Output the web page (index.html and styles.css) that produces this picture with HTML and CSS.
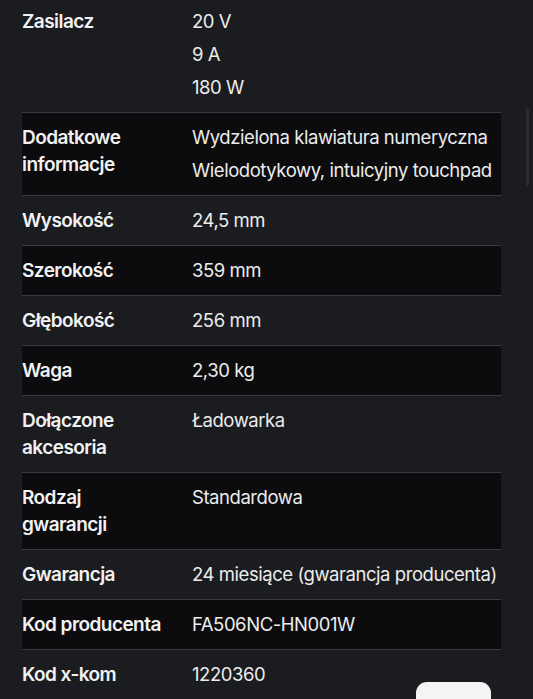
FILE: index.html
```html
<!DOCTYPE html>
<html lang="pl">
<head>
<meta charset="utf-8">
<link rel="stylesheet" href="styles.css">
</head>
<body>
<div class="page">
  <div class="specs">
    <div class="row">
      <div class="label">Zasilacz</div>
      <div class="values"><div class="v">20 V</div><div class="v">9 A</div><div class="v">180 W</div></div>
    </div>
    <div class="row dark">
      <div class="label">Dodatkowe informacje</div>
      <div class="values"><div class="v">Wydzielona klawiatura numeryczna</div><div class="v">Wielodotykowy, intuicyjny touchpad</div></div>
    </div>
    <div class="row">
      <div class="label">Wysokość</div>
      <div class="values"><div class="v">24,5 mm</div></div>
    </div>
    <div class="row dark">
      <div class="label">Szerokość</div>
      <div class="values"><div class="v">359 mm</div></div>
    </div>
    <div class="row">
      <div class="label">Głębokość</div>
      <div class="values"><div class="v">256 mm</div></div>
    </div>
    <div class="row dark">
      <div class="label">Waga</div>
      <div class="values"><div class="v">2,30 kg</div></div>
    </div>
    <div class="row">
      <div class="label">Dołączone akcesoria</div>
      <div class="values"><div class="v">Ładowarka</div></div>
    </div>
    <div class="row dark">
      <div class="label">Rodzaj gwarancji</div>
      <div class="values"><div class="v">Standardowa</div></div>
    </div>
    <div class="row">
      <div class="label">Gwarancja</div>
      <div class="values"><div class="v">24 miesiące (gwarancja producenta)</div></div>
    </div>
    <div class="row dark">
      <div class="label">Kod producenta</div>
      <div class="values"><div class="v">FA506NC-HN001W</div></div>
    </div>
    <div class="row last">
      <div class="label">Kod x-kom</div>
      <div class="values"><div class="v">1220360</div></div>
    </div>
  </div>
  <div class="scrollbar"></div>
  <div class="fab"></div>
</div>
</body>
</html>
```

FILE: styles.css
```css
html, body {
  margin: 0;
  padding: 0;
  background: #1b1c1f;
  height: 100%;
  overflow: hidden;
}
.page {
  position: relative;
  height: 699px;
  font-family: Inter, "Noto Sans", sans-serif;
  color: #f2f2f2;
}
.specs {
  margin: -3px 32px 0 22px;
  display: flex;
  flex-direction: column;
}
.row {
  display: grid;
  grid-template-columns: 170px 1fr;
  padding: 11px 0;
  border-bottom: 1px solid #3a3b3e;
}
.row.dark {
  background: #0c0c0e;
}
.row.last {
  border-bottom: none;
}
.label {
  font-weight: 600;
  font-size: 19px;
  line-height: 27px;
  letter-spacing: -0.55px;
  padding-right: 26px;
}
.values {
  display: flex;
  flex-direction: column;
  gap: 6px;
  font-size: 18.5px;
  line-height: 27px;
  font-weight: 400;
  letter-spacing: -0.45px;
  white-space: nowrap;
  color: #ececec;
}
.scrollbar {
  position: absolute;
  left: 526px;
  top: 111px;
  width: 3px;
  height: 78px;
  border-radius: 2px;
  background: #2b2c30;
}
.fab {
  position: absolute;
  left: 416px;
  top: 685px;
  width: 75px;
  height: 40px;
  border-radius: 11px;
  background: #f4f4f5;
}
```
